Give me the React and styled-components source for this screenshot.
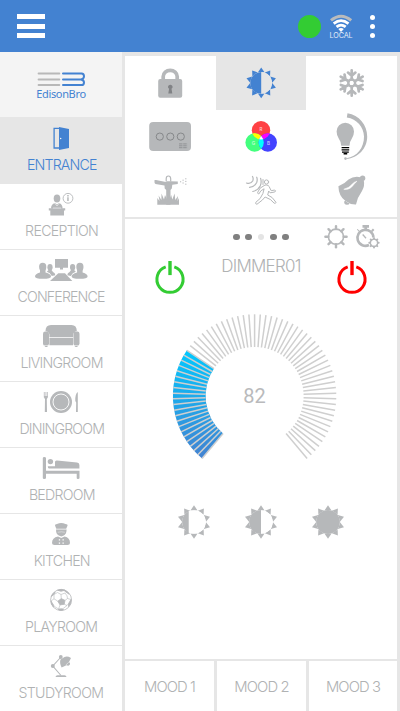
import React from 'react';
import styled, { createGlobalStyle } from 'styled-components';

const BLUE = '#4382d1';
const GREY = '#b6b8ba';
const LINE = '#e6e6e6';
const DARK = '#808285';

const GlobalStyle = createGlobalStyle`
  * { box-sizing: border-box; }
  body { margin: 0; background: #fff; }
  svg { display: block; }
`;

const Screen = styled.div`
  width: 400px;
  height: 711px;
  display: flex;
  flex-direction: column;
  overflow: hidden;
  background: #fff;
  font-family: Inter, 'Liberation Sans', sans-serif;
  font-weight: 300;
  color: #b0b2b3;
`;

const Header = styled.header`
  height: 52px;
  flex: none;
  display: flex;
  align-items: center;
  justify-content: space-between;
  padding: 0 25px 0 17px;
  background: ${BLUE};
`;

const MenuButton = styled.button`
  width: 28px;
  padding: 0;
  border: 0;
  background: none;
  display: grid;
  gap: 4.4px;
  &::before, &::after, & > span {
    content: '';
    display: block;
    height: 5px;
    background: #fff;
  }
`;

const Status = styled.div`
  display: flex;
  align-items: center;
  height: 100%;
`;

const Online = styled.span`
  width: 23px;
  height: 23px;
  border-radius: 50%;
  background: #33cc33;
  margin-right: 8px;
`;

const Network = styled.div`
  width: 24px;
  padding-top: 1px;
  display: flex;
  flex-direction: column;
  align-items: center;
  font: 400 7.2px/8px Inter, sans-serif;
  letter-spacing: -0.1px;
  color: #e2ecf8;
`;

const Kebab = styled.div`
  margin-left: 17px;
  display: grid;
  gap: 4px;
  & > i {
    width: 5px;
    height: 5px;
    border-radius: 50%;
    background: #fff;
  }
`;

const Body = styled.div`
  flex: 1;
  display: flex;
  min-height: 0;
`;

const Sidebar = styled.nav`
  width: 125px;
  flex: none;
  border-right: 3px solid ${LINE};
`;

const Brand = styled.div`
  height: 66px;
  padding-top: 20px;
  display: flex;
  flex-direction: column;
  align-items: center;
  background: #f4f4f4;
  border-bottom: 1px solid ${LINE};
`;

const BrandName = styled.span`
  margin-top: -1px;
  font: 400 11px/14px 'Noto Sans', sans-serif;
  letter-spacing: -0.35px;
  color: ${BLUE};
`;

const Room = styled.div`
  height: 66px;
  display: flex;
  flex-direction: column;
  align-items: center;
  border-bottom: 1px solid ${LINE};
  background: ${(p) => (p.$active ? LINE : '#fff')};
  color: ${(p) => (p.$active ? BLUE : '#b0b2b3')};
  & > svg { color: ${(p) => (p.$active ? BLUE : GREY)}; flex: none; }
`;

const RoomName = styled.span`
  font-size: 15px;
  line-height: 21px;
  white-space: nowrap;
  letter-spacing: ${(p) => p.$track}px;
  margin-right: ${(p) => p.$track}px;
  transform: scaleX(0.945);
`;

const Main = styled.main`
  flex: 1;
  display: flex;
  flex-direction: column;
  border-top: 4px solid ${LINE};
  border-right: 3px solid ${LINE};
`;

const Devices = styled.section`
  flex: none;
  display: grid;
  grid-template-columns: 91px 90px 91px;
  grid-template-rows: 54px 54px 53px;
  border-bottom: 2px solid ${LINE};
`;

const Device = styled.div`
  overflow: hidden;
  background: ${(p) => (p.$active ? LINE : '#fff')};
  color: ${(p) => (p.$active ? BLUE : GREY)};
`;

const Panel = styled.section`
  flex: 1;
  display: flex;
  flex-direction: column;
  align-items: center;
`;

const PanelTop = styled.div`
  width: 100%;
  height: 36px;
  display: grid;
  grid-template-columns: 1fr auto 1fr;
  align-items: center;
`;

const Pager = styled.div`
  display: flex;
  gap: 5.8px;
  grid-column: 2;
`;

const PageDot = styled.i`
  width: 6.6px;
  height: 6.6px;
  border-radius: 50%;
  background: ${(p) => (p.$current ? '#e4e4e4' : '#808080')};
`;

const Tools = styled.div`
  display: flex;
  justify-content: flex-end;
  padding-right: 16px;
`;

const PowerRow = styled.div`
  width: 100%;
  height: 44px;
  padding: 0 28.3px;
  display: flex;
  justify-content: space-between;
`;

const Title = styled.h1`
  margin: -1px 0 0;
  font-size: 17px;
  font-weight: 300;
  line-height: 24px;
  letter-spacing: -0.75px;
`;

const DialBox = styled.div`
  width: 272px;
  height: 170px;
  margin-top: 8px;
  display: grid;
  & > * { grid-area: 1 / 1; }
`;

const DialValue = styled.span`
  place-self: center;
  margin: 8px 13px 0 0;
  font: 400 20px/24px Roboto, sans-serif;
  color: #b9babc;
`;

const Presets = styled.div`
  display: flex;
  gap: 31.4px;
  margin-top: 27px;
  color: ${GREY};
`;

const Moods = styled.footer`
  flex: none;
  height: 52px;
  display: grid;
  grid-template-columns: 89px 89px 88px;
  gap: 3px;
  padding-top: 2px;
  background: ${LINE};
`;

const Mood = styled.div`
  background: #fff;
  display: flex;
  justify-content: center;
  padding-top: 16px;
  font-size: 14.8px;
  line-height: 20px;
  letter-spacing: -0.9px;
`;

/* Ten-pointed sun, disc filled up to the given level (0 to 1). */
function Sun({ x, y, scale = 1, level, gap = '#fff' }) {
  const id = `sun-${level}-${scale}`;
  const pt = (r, a) => `${(r * Math.sin(a)).toFixed(2)},${(-r * Math.cos(a)).toFixed(2)}`;
  return (
    <g transform={`translate(${x} ${y}) scale(${scale})`}>
      <clipPath id={id}><rect x="-13" y="-13" width={1 + 24 * level + (level === 1 ? 2 : 0)} height="26" /></clipPath>
      {Array.from({ length: 10 }, (_, i) => {
        const a = (i * Math.PI) / 5;
        return <polygon key={i} fill="currentColor" points={`${pt(16.8, a)} ${pt(12, a + 0.3)} ${pt(12, a - 0.3)}`} />;
      })}
      <circle r="11.8" fill={gap} />
      <circle r="11.9" fill="currentColor" clipPath={`url(#${id})`} />
    </g>
  );
}

const person = (cx, cy, rx, ry) => <ellipse cx={cx} cy={cy} rx={rx} ry={ry} />;

const roomIcons = {
  door: (
    <g fill="currentColor">
      <path d="M59 10.3H54.1V30H59" fill="none" stroke="currentColor" strokeWidth="1.3" />
      <path d="M59 9L69 11V30L59 32Z" />
      <circle cx="60.7" cy="20.5" r=".7" fill="#fff" />
    </g>
  ),
  reception: (
    <g fill="currentColor">
      {person(57, 14.5, 3.3, 4)}
      <path d="M51 24.5Q51 20 55 19L57 20.5L59 19Q62.6 20 62.6 24.5Z" />
      <path d="M48.8 24.3H65.2V26.6H48.8ZM50.3 26.6H64V31.5H50.3Z" />
      <path d="M54.5 19L57 22L59.5 19M53 24H61" fill="none" stroke="#fff" strokeWidth=".5" />
      <circle cx="68" cy="14.3" r="4.9" fill="none" stroke="currentColor" strokeWidth=".9" />
      <path d="M67.2 13.3H68.7V17H67.2ZM67.2 11.1H68.7V12.4H67.2Z" />
    </g>
  ),
  conference: (
    <g fill="currentColor">
      <path d="M55 9H68V17.7H63V19.5H60V17.7H55Z" />
      <path d="M58.3 23.3H65L72.3 31H50Z" />
      {[1, -1].map((s) => (
        <g key={s} transform={s === 1 ? undefined : 'translate(122.6 0) scale(-1 1)'}>
          {person(42.7, 17, 3.6, 4.2)}
          {person(50, 17.2, 2.6, 3.3)}
          <path d="M35 26.5Q35 24 40 22.5V19H45.5V22.5Q51 24 51 26.5Q51 28.8 43 28.8T35 26.5Z" />
          <path d="M46.8 21.8L49 19.5H51.2L53 22Q55.3 23 55.3 25.3L51.8 26Q50.3 22.8 46.8 21.8Z" />
        </g>
      ))}
    </g>
  ),
  sofa: (
    <g fill="currentColor">
      <path d="M45.5 15Q45.5 9 51 9H71.5Q76.8 9 76.8 15Q73.5 15.5 73.2 18.5V21H49.4V18.5Q49 15.5 45.5 15Z" />
      <rect x="43" y="15.6" width="6" height="14" rx="2.2" />
      <rect x="73.5" y="15.6" width="6" height="14" rx="2.2" />
      <path d="M49.4 21.7H73.1V29.2H49.4ZM44.5 30H48L47 31H45.5ZM74.5 30H78L77 31H75.5Z" />
    </g>
  ),
  dining: (
    <g fill="currentColor">
      <circle cx="61" cy="20" r="11" />
      <circle cx="61" cy="20" r="8" fill="none" stroke="#fff" strokeWidth=".9" />
      <path d="M44.3 10V15.5M45.9 10V15.5M47.4 10V15.5" stroke="currentColor" strokeWidth=".8" />
      <path d="M44 14H47.8Q47.7 16.6 46.8 17L47 30H44.8L45 17Q44 16.6 44 14Z" />
      <path d="M77.8 10V30H76L76.2 20.5L75.3 19Q75 12 77.8 10Z" />
    </g>
  ),
  bed: (
    <g fill="currentColor">
      <path d="M42.8 10Q42.8 9 44.3 9T46 10V22.7H79.5V30Q79.5 31 78 31T76.7 30V25.8H46V30Q46 31 44.3 31T42.8 30Z" />
      <circle cx="50.4" cy="13.6" r="2.7" />
      <path d="M55 14Q55 12.3 57 12.5L77 14.4Q79.4 14.8 79.4 17V20.4H48.8Q47.8 20.4 47.8 18.3H55Z" />
    </g>
  ),
  chef: (
    <g fill="currentColor">
      <path d="M56.3 14.7L55 11.5Q54.7 10 57 10Q61.2 7.8 65.5 10Q68 10 67.6 11.5L66.2 14.7Z" />
      <path d="M56 15.6H66.6Q66.5 20 63.8 21.5L61.3 22.5L58.8 21.5Q56 20 56 15.6Z" />
      <path d="M52 29Q52 23.5 58 22.5L61.3 24L64.6 22.5Q70 23.5 70 29Q70 31 67.5 31H54.5Q52 31 52 29Z" />
      <path d="M57.8 18.3Q61.3 17.3 64.8 18.3" fill="none" stroke="#fff" strokeWidth=".4" />
      <g fill="#fff"><path d="M58.8 25.3h1.3v1.3h-1.3zM62.5 25.3h1.3v1.3h-1.3zM58.8 28.4h1.3v1.3h-1.3zM62.5 28.4h1.3v1.3h-1.3z" /></g>
    </g>
  ),
  ball: (
    <g fill="none" stroke="currentColor" strokeWidth=".8">
      <circle cx="61.1" cy="20" r="10.5" />
      <g fill="currentColor">
        <path d="M61.3 18.6L65 20.4L64.2 24.3L60 24.9L57.8 21.2Z" />
        <path d="M57.5 10.2L61 11.3L65 10.2Q61 8.5 57.5 10.2ZM64.5 11L69.2 14.3Q67.5 11 64.5 10.2ZM51.4 16.5L54 14.3L55.2 12Q52 13.5 51.4 16.5ZM51 21L53.2 24.5L53.6 27.2Q51 24.5 51 21ZM58.6 29L62.5 28.8L63.5 30Q61 30.9 58.6 30ZM68.6 23.5L71 19.5Q71.3 24 68.5 26.6Z" />
      </g>
      <path strokeWidth=".6" d="M61.3 18.6L61 14.5L57.5 12.5L54 14.5L54 18.8L57.8 21.2M61 14.5L65 13L67 15.8L67.5 18.5L65 20.4M67.5 18.5L71 19.5M64.2 24.3L67 25.5L68.6 23.5M67 25.5L62.5 29M60 24.9L58.6 29L54.5 26.5L53.2 24.5M54 18.8L51 21" />
    </g>
  ),
  lamp: (
    <g fill="currentColor">
      <path d="M61 11L52.8 20L61 29.5" fill="none" stroke="currentColor" strokeWidth="1.1" />
      <circle cx="52.8" cy="20" r="2" />
      <circle cx="60.8" cy="11" r="1.9" />
      <path d="M60.5 13.5L64.5 11Q67.5 9.8 71 12L69 16Q70.6 17.2 69.9 18.6Q68.9 20.4 66.5 19.2L61.6 21.6Q59.3 17 60.5 13.5Z" />
      <path d="M65.8 19L68.8 16.2" stroke="#fff" strokeWidth=".5" />
      <path d="M55.5 31Q55.7 29.2 57.5 29.2H64.5Q66.3 29.2 66.5 31Z" />
    </g>
  ),
};

const rooms = [
  ['ENTRANCE', 'door', -0.9],
  ['RECEPTION', 'reception', -0.75],
  ['CONFERENCE', 'conference', -0.9],
  ['LIVINGROOM', 'sofa', -0.77],
  ['DININGROOM', 'dining', -0.88],
  ['BEDROOM', 'bed', -0.8],
  ['KITCHEN', 'chef', -0.8],
  ['PLAYROOM', 'ball', -0.78],
  ['STUDYROOM', 'lamp', -0.7],
];

const flakeArm = 'M0 -3.5V-12.7M0 -7.2L-3.7 -10.4M0 -7.2L3.7 -10.4';

const Rgb = () => (
  <g>
    <clipPath id="in-red"><circle cx="261" cy="130.3" r="9.2" /></clipPath>
    <clipPath id="in-green"><circle cx="254.6" cy="142.5" r="9.2" /></clipPath>
    <circle cx="261" cy="130.3" r="9.2" fill="#ff4144" />
    <circle cx="254.6" cy="142.5" r="9.2" fill="#43ff7e" />
    <circle cx="267.8" cy="142.5" r="9.2" fill="#4343ff" />
    <g clipPath="url(#in-red)">
      <circle cx="254.6" cy="142.5" r="9.2" fill="#ff0" />
      <circle cx="267.8" cy="142.5" r="9.2" fill="#f0f" />
    </g>
    <g clipPath="url(#in-green)">
      <circle cx="267.8" cy="142.5" r="9.2" fill="#0ff" />
      <g clipPath="url(#in-red)"><circle cx="267.8" cy="142.5" r="9.2" fill="#fff" /></g>
    </g>
    <g fill="#fff" fillOpacity=".75" fontSize="4.5" fontFamily="Inter, sans-serif" fontWeight="500" textAnchor="middle">
      <text x="261" y="131">R</text>
      <text x="253.4" y="145">G</text>
      <text x="268.6" y="145">B</text>
    </g>
  </g>
);

const devices = [
  { box: '125 56 91 54', art: (
    <g fill="currentColor">
      <path d="M163.2 80V76.5A7 6.2 0 0 1 177.2 76.5V80" fill="none" stroke="currentColor" strokeWidth="3.7" />
      <rect x="158.2" y="79" width="24" height="18.7" rx="2" />
      <path d="M170.3 84.7A2.2 2.2 0 0 1 171.5 88.8L172.3 93.5H168.3L169.1 88.8A2.2 2.2 0 0 1 170.3 84.7Z" fill={DARK} />
    </g>) },
  { box: '216 56 90 54', active: true, art: <Sun x={261.2} y={82.9} scale={0.92} level={0.5} gap={LINE} /> },
  { box: '306 56 91 54', art: (
    <g transform="translate(351.7 83)" fill="none" stroke="currentColor" strokeWidth="2.7" strokeLinecap="round">
      <circle r="3.5" strokeWidth="2.4" />
      {[0, 60, 120, 180, 240, 300].map((a) => <path key={a} d={flakeArm} transform={`rotate(${a})`} />)}
    </g>) },
  { box: '125 110 91 54', art: (
    <g>
      <rect x="149.2" y="122" width="41.8" height="29" rx="4" fill="currentColor" />
      <g fill="none" stroke={DARK} strokeWidth=".9">
        <circle cx="159.8" cy="136.6" r="3.6" /><circle cx="170.3" cy="136.6" r="3.6" /><circle cx="180.8" cy="136.6" r="3.6" />
        <path d="M179 143.9H187.5M179 145.8H187.5M179 147.7H187.5" strokeWidth=".7" strokeDasharray="3.5 .7" />
      </g>
    </g>) },
  { box: '216 110 90 54', art: <Rgb /> },
  { box: '306 110 91 54', art: (
    <g fill="currentColor">
      <path d="M341.2 145.7Q341 141.5 338.6 138.2Q336.6 135 336.6 131.6A8.7 8.9 0 0 1 354 131.6Q354 135 352 138.2Q349.6 141.5 349.5 145.7Z" />
      <path d="M341.6 147.6H349.2M341.6 149.9H349.2M342 152.1H348.8M343.6 153.8H347.2" stroke="#000" strokeWidth="1.4" />
      <path d="M347.5 113.3C359 115 367.2 125 367.2 136.5C367.2 148.5 358 158 346.5 159L346.5 158.2C357 157 364.2 147.5 364 136.5C363.7 127.5 357 119 346.8 117.6Z" />
      <circle cx="345.5" cy="158.6" r="1.3" />
    </g>) },
  { box: '125 164 91 53', art: (
    <g fill="currentColor">
      <path d="M154.4 180.3Q154.8 179.8 156 180L165.8 182L167 181.3H170.3L177.8 181.4V184L172.3 184.7L171.8 188.5L170.5 190V204.7H166.2V190L164.7 188.5L164.5 185.5L155.5 183.9Q154.2 183.4 154.4 180.3Z" />
      <path d="M166.2 181.5V178.8Q166.2 176 168.4 176T170.7 178.8V181.5" fill="none" stroke="currentColor" strokeWidth="1.2" />
      <path d="M157.3 204.8V198L159.5 201L158.6 195.5L161.4 200L161.5 193.5L164 199.5L165 195L168.3 202L171.2 195L172.3 199.5L174.6 193.5L175.3 200L178 196L177.5 201L179 198V204.8Z" />
      <path d="M180 181.8h1.2M182.5 180.2h1.2M182.5 183h1.2M185.2 178.8h1.2M185.2 181.4h1.2M185.2 184.2h1.2" stroke="currentColor" strokeWidth="1" />
    </g>) },
  { box: '216 164 90 53', art: (
    <g fill="none" stroke="currentColor" strokeWidth="1.2" strokeLinecap="round" strokeLinejoin="round">
      <path d="M246.5 183Q250.5 184.5 252.7 181Q253.7 178.5 252.5 176.5M249.5 187.3Q254.5 187 256.7 182.5Q257.7 179.5 256.7 177.2M252.8 191.5Q258.3 190.3 260.3 185.8Q261.8 182 260.6 178.4" />
      <circle cx="266.5" cy="182" r="2.1" strokeWidth="1" />
      <path strokeWidth="1" d="M265 185Q268.5 184.5 269.4 188L270.8 190.7L274.3 190Q275.9 190.8 274.4 192L269.7 192.8L268.3 191L267.3 195L271.7 197.5L275.6 202.3Q275.2 203.9 273.8 203.2L270 199.5L264.7 197L262 200L256.5 204.3Q254.7 204 255.4 202.3L259.7 198.5L262.5 193.5L263.7 188.8L260.5 190.8L258.4 194Q256.8 193.5 257.3 192.3L259.5 188.5Z" transform="translate(.4 0)" />
      <path strokeWidth="1" d="M263 179.5V184.5" />
    </g>) },
  { box: '306 164 91 53', art: (
    <g fill="currentColor">
      <circle cx="362.6" cy="178.2" r="2.7" />
      <path d="M338.4 186.2Q344.5 184 348.5 179.5Q354 175.8 360.5 177.3L363.8 180.5Q365 186 362 191Q357.3 197.5 356 204.5Q350.5 204.8 345.5 201Q338.6 196 338.4 186.2Z" />
      <path d="M343.8 189.3Q349.5 187.7 352 184.3Q354.3 181.7 357 181.2Q353.9 184 352.8 185.8Q349.8 190 343.8 189.3Z" fill="#fff" stroke="#fff" strokeWidth=".5" />
      <path d="M344.3 201.2Q343.6 204.6 347 204.8Q349.2 204.8 349.6 203.2Q346.8 202.8 345.4 200.8Z" />
    </g>) },
];

function Gear({ cx, cy, r, tooth, teeth = 8, width = 1.6 }) {
  return (
    <g transform={`translate(${cx} ${cy})`} fill="none" stroke="currentColor" strokeWidth={width}>
      <circle r={r} />
      {Array.from({ length: teeth }, (_, i) => (
        <path key={i} d={`M0 ${-r}V${-tooth}`} strokeWidth={width * 1.5} strokeLinecap="round" transform={`rotate(${(360 / teeth) * i})`} />
      ))}
    </g>
  );
}

const Power = ({ color }) => (
  <svg width="34" height="40" viewBox="-17 -24.3 34 40" fill="none" stroke={color} strokeWidth="3">
    <path d="M4.3 -12.4A13.1 13.1 0 1 1 -4.3 -12.4" />
    <path d="M0 -18.3V-4.2" strokeWidth="3.4" />
  </svg>
);

function Dial({ value }) {
  const cx = 254.6;
  const cy = 396;
  const at = (r, deg) => {
    const a = (deg * Math.PI) / 180;
    return `${(cx + r * Math.sin(a)).toFixed(2)} ${(cy - r * Math.cos(a)).toFixed(2)}`;
  };
  const start = -140;
  const end = -56;
  return (
    <DialBox>
      <svg width="272" height="170" viewBox="125 307 272 170">
        <defs>
          <linearGradient id="fill" x1="0" y1="0" x2="0" y2="1">
            <stop offset="0" stopColor="#00c8ff" />
            <stop offset="1" stopColor={BLUE} />
          </linearGradient>
        </defs>
        <path fill="url(#fill)" d={`M${at(81.7, start)}A81.7 81.7 0 0 1 ${at(81.7, end)}L${at(49, end)}A49 49 0 0 0 ${at(49, start)}Z`} />
        {Array.from({ length: 71 }, (_, i) => (
          <path key={i} d={`M${at(49, start + i * 4)}L${at(81.7, start + i * 4)}`} stroke="#cfcfcf" strokeWidth="1.5" />
        ))}
      </svg>
      <DialValue>{value}</DialValue>
    </DialBox>
  );
}

export default function App() {
  return (
    <Screen>
      <GlobalStyle />
      <Header>
        <MenuButton aria-label="Menu"><span /></MenuButton>
        <Status>
          <Online />
          <Network>
            <svg width="24" height="18" viewBox="329 14 24 18" fill="none">
              <path d="M331 20.4Q341 12 351.2 20.4" stroke="#b9bbbd" strokeWidth="3" />
              <path d="M333.7 23.6Q341 17.6 348.5 23.6M336.5 26.9Q341 23.2 345.7 26.9" stroke="#fff" strokeWidth="2.7" />
              <path d="M338.3 29Q341 26.9 343.8 29L341 32Z" fill="#fff" />
            </svg>
            LOCAL
          </Network>
          <Kebab><i /><i /><i /></Kebab>
        </Status>
      </Header>
      <Body>
        <Sidebar>
          <Brand>
            <svg width="50" height="16" viewBox="36 72 50 16" fill="none" strokeWidth="2" strokeLinecap="round" strokeLinejoin="round">
              <path d="M38.6 73.6H59.3M38.6 79.4H59.3M38.6 85.1H59.3" stroke="#b8b8b8" />
              <path d="M63 73.6H81.5Q84 73.8 84 76.3Q84 79 81 79.4H63M81 79.4Q84 79.8 84 82.4Q84 85 81.5 85.1H63" stroke={BLUE} />
            </svg>
            <BrandName>EdisonBro</BrandName>
          </Brand>
          {rooms.map(([name, icon, track], i) => (
            <Room key={name} $active={i === 0}>
              <svg width="122" height="36" viewBox="0 0 122 36">{roomIcons[icon]}</svg>
              <RoomName $track={track}>{name}</RoomName>
            </Room>
          ))}
        </Sidebar>
        <Main>
          <Devices>
            {devices.map(({ box, art, active }) => {
              const [, , w, h] = box.split(' ');
              return <Device key={box} $active={active}><svg width={w} height={h} viewBox={box}>{art}</svg></Device>;
            })}
          </Devices>
          <Panel>
            <PanelTop>
              <Pager>{[0, 1, 2, 3, 4].map((i) => <PageDot key={i} $current={i === 2} />)}</Pager>
              <Tools>
                <svg width="58" height="28" viewBox="323 223 58 28" color={GREY}>
                  <Gear cx={336} cy={236.7} r={7.6} tooth={10.6} />
                  <g fill="none" stroke="currentColor">
                    <path d="M369 245A8 8 0 1 1 373.4 237.5" strokeWidth="2.6" />
                    <path d="M362.5 226.4H369M365.7 226.5V230M372 229.5L373.5 231M358.5 229.8L357.8 230.5" strokeWidth="2.6" />
                    <path d="M362.7 234.5L366 238.2" strokeWidth="1.3" />
                  </g>
                  <Gear cx={374} cy={242.8} r={3.7} tooth={4.7} width={1.3} />
                </svg>
              </Tools>
            </PanelTop>
            <PowerRow>
              <Power color="#33cc33" />
              <Title>DIMMER01</Title>
              <Power color="#ff0000" />
            </PowerRow>
            <Dial value={82} />
            <Presets>
              {[0.28, 0.5, 1].map((level) => (
                <svg key={level} width="36" height="38" viewBox="-18 -18 36 38"><Sun x={0} y={0} level={level} /></svg>
              ))}
            </Presets>
          </Panel>
          <Moods>
            <Mood>MOOD 1</Mood>
            <Mood>MOOD 2</Mood>
            <Mood>MOOD 3</Mood>
          </Moods>
        </Main>
      </Body>
    </Screen>
  );
}
